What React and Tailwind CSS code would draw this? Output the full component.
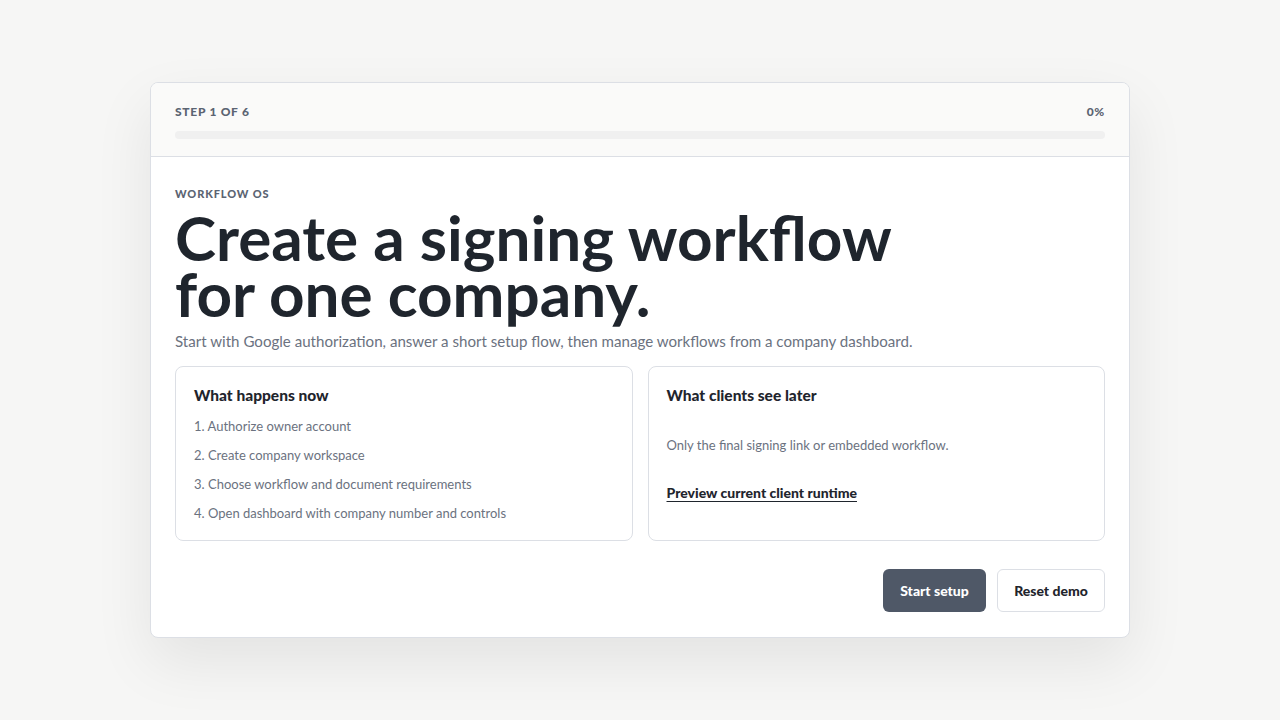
import React from 'react';

const steps = [
  'Authorize owner account',
  'Create company workspace',
  'Choose workflow and document requirements',
  'Open dashboard with company number and controls',
];

export default function App() {
  return (
    <div className="min-h-screen w-full bg-[#f6f6f5] flex items-start justify-center pt-[82px] font-['Lato',sans-serif]">
      <div className="w-[980px] rounded-lg border border-[#dcdfe5] bg-white shadow-[0_24px_60px_rgba(0,0,0,0.08)] overflow-hidden">
        {/* progress header */}
        <div className="bg-[#fafaf9] border-b border-[#dcdfe5] px-6 pt-[20px] pb-[17px]">
          <div className="flex items-center justify-between text-[12px] font-black tracking-[0.06em] text-[#5b6472]">
            <span>STEP 1 OF 6</span>
            <span>0%</span>
          </div>
          <div className="mt-[10px] h-[8px] rounded-full bg-[#f0f0f0]">
            <div className="h-full rounded-full bg-[#4f5867]" style={{ width: '0%' }} />
          </div>
        </div>

        {/* body */}
        <div className="px-6 pt-[29px] pb-[25px]">
          <div className="text-[11px] font-black tracking-[0.08em] text-[#5b6472]">WORKFLOW OS</div>
          <h1 className="mt-[6px] text-[62px] leading-[56px] font-bold text-[#1f252d]">
            Create a signing workflow
            <br />
            for one company.
          </h1>
          <p className="mt-[9px] text-[15.1px] text-[#6b7280]">
            Start with Google authorization, answer a short setup flow, then manage workflows from a company dashboard.
          </p>

          <div className="mt-[14px] grid grid-cols-2 gap-[15px]">
            <div className="rounded-lg border border-[#dcdfe5] h-[175px] px-[18px] pt-[17px]">
              <h2 className="text-[15.5px] leading-[22px] font-black text-[#1f252d]">What happens now</h2>
              <ol className="mt-[10px] flex flex-col gap-[9px] text-[13px] text-[#6b7280]">
                {steps.map((s, i) => (
                  <li key={i} className="leading-[20px]">{i + 1}. {s}</li>
                ))}
              </ol>
            </div>
            <div className="rounded-lg border border-[#dcdfe5] h-[175px] px-[18px] pt-[17px]">
              <h2 className="text-[15.5px] leading-[22px] font-black text-[#1f252d]">What clients see later</h2>
              <p className="mt-[29px] text-[13px] text-[#6b7280] leading-[20px]">
                Only the final signing link or embedded workflow.
              </p>
              <a href="#" className="mt-[28px] inline-block text-[14px] font-black text-[#1f252d] underline underline-offset-[3px] leading-[20px]">
                Preview current client runtime
              </a>
            </div>
          </div>

          <div className="mt-[28px] flex justify-end gap-[11px]">
            <button className="h-[43px] w-[103px] rounded-md bg-[#4f5867] text-white text-[14px] font-black">
              Start setup
            </button>
            <button className="h-[43px] w-[108px] rounded-md border border-[#dcdfe5] bg-white text-[#1f252d] text-[14px] font-black">
              Reset demo
            </button>
          </div>
        </div>
      </div>
    </div>
  );
}
